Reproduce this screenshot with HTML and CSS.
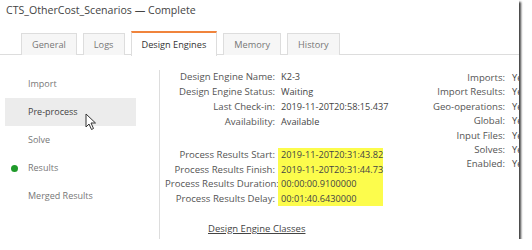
FILE: index.html
```html
<!DOCTYPE html>
<html lang="en">
<head>
    <meta charset="utf-8">
    <title>CTS_OtherCost_Scenarios</title>
    <link rel="stylesheet" href="styles.css">
</head>
<body>
    <div class="window">
        <h1 class="title">CTS_OtherCost_Scenarios — Complete</h1>

        <ul class="tabs">
            <li class="tab">General</li>
            <li class="tab">Logs</li>
            <li class="tab active">Design Engines</li>
            <li class="tab">Memory</li>
            <li class="tab">History</li>
        </ul>

        <div class="panel">
            <ul class="steps">
                <li class="step">Import</li>
                <li class="step hover">Pre-process
                    <svg class="cursor" width="12" height="18" viewBox="0 0 12 18">
                        <path d="M1 1 L1 14 L4 11 L6.5 16.5 L8.5 15.5 L6 10 L10.5 10 Z" fill="#fff" stroke="#333" stroke-width="1"/>
                    </svg>
                </li>
                <li class="step">Solve</li>
                <li class="step done"><span class="dot"></span>Results</li>
                <li class="step">Merged Results</li>
            </ul>

            <div class="details">
                <div class="cols">
                    <dl class="info">
                        <dt>Design Engine Name:</dt><dd>K2-3</dd>
                        <dt>Design Engine Status:</dt><dd>Waiting</dd>
                        <dt>Last Check-in:</dt><dd>2019-11-20T20:58:15.437</dd>
                        <dt>Availability:</dt><dd>Available</dd>
                        <dt class="gap"></dt><dd class="gap"></dd>
                        <dt>Process Results Start:</dt><dd class="mark">2019-11-20T20:31:43.82</dd>
                        <dt>Process Results Finish:</dt><dd class="mark">2019-11-20T20:31:44.73</dd>
                        <dt>Process Results Duration:</dt><dd class="mark">00:00:00.9100000</dd>
                        <dt>Process Results Delay:</dt><dd class="mark">00:01:40.6430000</dd>
                    </dl>
                    <dl class="info flags">
                        <dt>Imports:</dt><dd>Yes</dd>
                        <dt>Import Results:</dt><dd>Yes</dd>
                        <dt>Geo-operations:</dt><dd>Yes</dd>
                        <dt>Global:</dt><dd>Yes</dd>
                        <dt>Input Files:</dt><dd>Yes</dd>
                        <dt>Solves:</dt><dd>Yes</dd>
                        <dt>Enabled:</dt><dd>Yes</dd>
                    </dl>
                </div>
                <a class="classes" href="#">Design Engine Classes</a>
            </div>
        </div>
    </div>
</body>
</html>
```

FILE: styles.css
```css
body {
    margin: 0;
    background-color: #fff;
    font-family: "Open Sans", Arial, sans-serif;
    color: #444;
}
.window {
    width: 519px;
    height: 239px;
    background-color: #fff;
    box-shadow: 2px 2px 2px rgba(0, 0, 0, 0.75);
    overflow: hidden;
}
.title {
    margin: 0;
    padding: 3px 0 0 6px;
    font-size: 10.6px;
    font-weight: normal;
    color: #444;
    height: 29px;
    box-sizing: border-box;
}
.tabs {
    list-style: none;
    margin: 0;
    padding: 0 0 0 21px;
    display: flex;
    gap: 6px;
    border-bottom: 1px solid #ddd;
    height: 22px;
    margin-top: 3px;
}
.tab {
    height: 21px;
    padding: 0 10px;
    font-size: 9.2px;
    line-height: 21px;
    color: #777;
    background-color: #f6f6f6;
    border: 1px solid #ddd;
    border-bottom: none;
    margin-top: 1px;
}
.tab.active {
    margin-top: -1px;
    height: 23px;
    line-height: 24px;
    border-top: 2px solid #f0843c;
    background-color: #fff;
    color: #333;
}
.panel {
    display: flex;
    height: 184px;
}
.steps {
    flex-shrink: 0;
    list-style: none;
    margin: 15px 0 0 0;
    padding: 0 0 0 5px;
    width: 154px;
    border-right: 1px solid #ddd;
}
.step {
    position: relative;
    height: 28px;
    line-height: 28px;
    padding-left: 23px;
    width: 108px;
    font-size: 9px;
    color: #777;
}
.step.hover {
    background-color: #ececec;
    color: #444;
}
.cursor {
    position: absolute;
    left: 80px;
    top: 15px;
}
.dot {
    position: absolute;
    left: 6px;
    top: 11px;
    width: 7px;
    height: 7px;
    border-radius: 50%;
    background-color: #1f9a2a;
}
.details {
    flex: 1;
    min-width: 0;
    display: flex;
    flex-direction: column;
    font-size: 9.5px;
    padding-left: 5px;
}
.cols {
    display: flex;
}
.info {
    flex-shrink: 0;
    margin: 15px 0 0 0;
    display: grid;
    grid-template-columns: 113px 105px;
    grid-template-rows: repeat(4, 15px) 18px repeat(4, 14.5px);
    line-height: 14.5px;
}
.info dt {
    text-align: right;
    padding-right: 3px;
    font-size: 9.6px;
    color: #555;
    white-space: nowrap;
}
.info dd {
    margin: 0;
    padding-left: 3px;
    font-size: 9.2px;
    color: #444;
    white-space: nowrap;
}
.info dd.mark {
    background-color: #fcfc4c;
}
.flags {
    grid-template-columns: 126px auto;
    grid-template-rows: repeat(7, 14.4px);
    margin-top: 16px;
}
.flags dt {
    padding-right: 4px;
}
.classes {
    margin: 16px 0 0 43px;
    color: #444;
    text-decoration: underline;
}
```
